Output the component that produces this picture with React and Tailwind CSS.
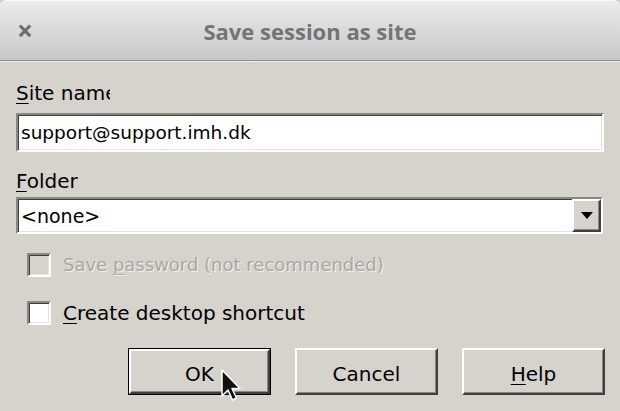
const FONT = { fontFamily: '"DejaVu Sans", "Liberation Sans", sans-serif' };

const sunken =
  "border-2 border-t-[#8a8782] border-l-[#8a8782] border-b-white border-r-white shadow-[inset_1px_1px_0_#3f3f3f,inset_-1px_-1px_0_#e6e3de]";

const raised =
  "border-2 border-t-white border-l-white border-b-[#3f3f3f] border-r-[#3f3f3f] shadow-[inset_-1px_-1px_0_#8a8782]";

function Underlined({ first, rest }) {
  return (
    <>
      <span className="underline decoration-1 underline-offset-[3px]">{first}</span>
      {rest}
    </>
  );
}

function Checkbox({ disabled, children }) {
  return (
    <div className="flex items-center gap-[12px] pl-[11px]">
      <div
        className={`h-[24px] w-[24px] ${sunken} ${disabled ? "bg-[#d6d2cc]" : "bg-white"}`}
      />
      <span
        className={`leading-[22px] ${
          disabled
            ? "text-[18px] text-[#aaa7a2] [text-shadow:1px_1px_0_#f4f2ee]"
            : "text-[20px] text-black"
        }`}
      >
        {children}
      </span>
    </div>
  );
}

function DialogButton({ children, isDefault }) {
  return (
    <div className={`h-[47px] w-[143px] ${isDefault ? "border border-black" : ""}`}>
      <div
        className={`flex h-full w-full items-center justify-center pt-[4px] text-[20px] text-black ${raised}`}
      >
        {children}
      </div>
    </div>
  );
}

export default function App() {
  return (
    <div className="relative h-[411px] w-[620px] overflow-hidden bg-[#d6d2cc]" style={FONT}>
      {/* window title bar */}
      <div className="relative flex h-[61px] items-center justify-center rounded-t-[7px] border-b border-b-[#8f8f8f] bg-gradient-to-b from-[#ececec] to-[#c8c8c8] shadow-[inset_0_1px_0_#fafafa]">
        <span
          className="absolute left-[17px] top-[15px] text-[28px] font-bold leading-[30px] text-[#6c6c6c]"
          style={{ fontFamily: '"Noto Sans", sans-serif' }}
        >
          ×
        </span>
        <span
          className="mt-[3px] text-[22px] font-bold text-[#747478]"
          style={{ fontFamily: '"Open Sans", "Noto Sans", sans-serif' }}
        >
          Save session as site
        </span>
      </div>
      <div className="h-px bg-[#f0eeea]" />

      <div className="flex flex-col pl-[16px] pr-[15px]">
        <label className="mt-[20px] w-[94px] overflow-hidden whitespace-nowrap text-[20px] leading-[22px] text-black">
          <Underlined first="S" rest="ite name" />
        </label>

        <div
          className={`mt-[9px] flex h-[39px] w-[588px] items-center bg-white pl-[3px] text-[18.5px] text-black ${sunken}`}
        >
          support@support.imh.dk
        </div>

        <label className="mt-[18px] text-[20px] leading-[22px] text-black">
          <Underlined first="F" rest="older" />
        </label>

        <div
          className={`mt-[5px] flex h-[37px] w-[587px] items-center justify-between bg-white pl-[3px] text-[19px] text-black ${sunken}`}
        >
          <span className="pt-[2px]">&lt;none&gt;</span>
          <div className={`flex h-full w-[29px] items-center justify-center bg-[#d6d2cc] ${raised}`}>
            <svg width="12" height="7" viewBox="0 0 12 7">
              <path d="M0 0 H12 L6 7 Z" fill="#000" />
            </svg>
          </div>
        </div>

        <div className="mt-[19px]">
          <Checkbox disabled>
            Save <Underlined first="p" rest="assword (not recommended)" />
          </Checkbox>
        </div>
        <div className="mt-[24px]">
          <Checkbox>
            <Underlined first="C" rest="reate desktop shortcut" />
          </Checkbox>
        </div>

        <div className="mt-[23px] flex justify-end gap-[24px]">
          <DialogButton isDefault>OK</DialogButton>
          <DialogButton>Cancel</DialogButton>
          <DialogButton>
            <Underlined first="H" rest="elp" />
          </DialogButton>
        </div>
      </div>

      {/* mouse pointer */}
      <svg className="absolute left-[221px] top-[369px]" width="26" height="38" viewBox="0 0 26 38">
        <path
          d="M1 1 L1 27 L7 21 L11.5 31 L15.5 29 L11 19.5 L19 19.5 Z"
          fill="#111"
          stroke="#fff"
          strokeWidth="1.5"
          strokeLinejoin="round"
        />
      </svg>
    </div>
  );
}
